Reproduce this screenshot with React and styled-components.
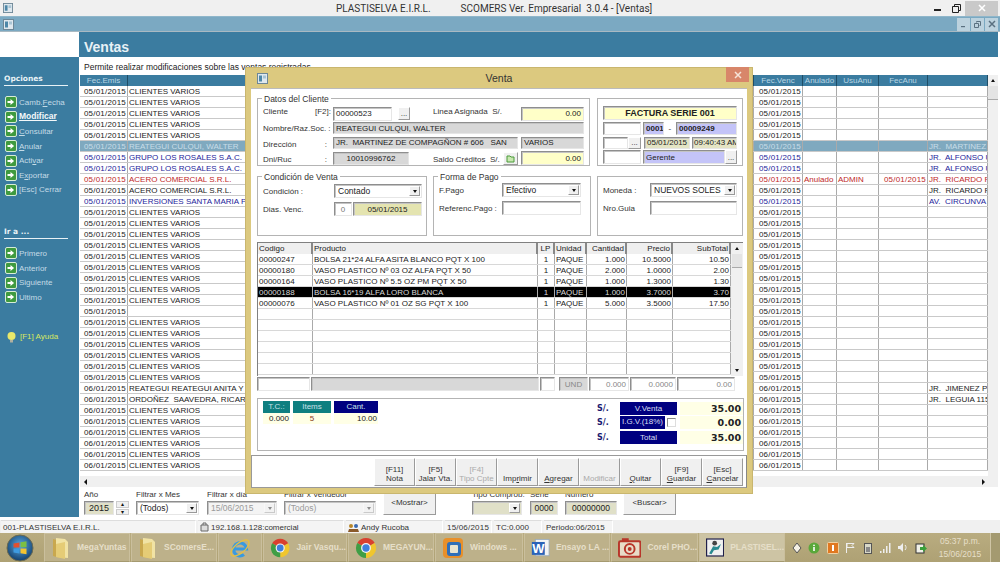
import React from 'react';
import styled, { createGlobalStyle } from 'styled-components';

const GlobalStyle = createGlobalStyle`
  html, body { margin: 0; padding: 0; background: #fff; overflow: hidden; }
  * { box-sizing: border-box; }
`;

const Screen = styled.div`
  position: relative;
  width: 1000px;
  height: 562px;
  display: flex;
  flex-direction: column;
  overflow: hidden;
  font-family: "Liberation Sans", Arial, sans-serif;
  font-size: 8px;
  line-height: 11px;
  color: #222;
  background: #f0f0f0;
`;

const TitleBar = styled.div`
  height: 16px;
  display: flex;
  align-items: center;
  padding-left: 3px;
  background: #f0f0f0;
  color: #333;
  font-family: Roboto, "Liberation Sans", sans-serif;
  font-size: 10px;
`;
const AppTitle = styled.div`
  margin-left: 323px;
  width: 591px;
  display: flex;
  gap: 30px;
  white-space: pre;
`;
const WinControls = styled.div`
  display: flex;
  align-items: center;
  height: 15px;
  margin-left: auto;
  margin-right: 2px;
`;
const WinGlyph = styled.div`
  width: ${p => p.$w}px;
  height: 15px;
  display: flex;
  align-items: center;
  justify-content: center;
  background: ${p => p.$bg || 'transparent'};
`;

const MdiBar = styled.div`
  height: 16px;
  display: flex;
  align-items: center;
  padding: 0 2px 0 3px;
  background: #7ba9c2;
  border-top: 1px solid #8fb6ca;
  border-bottom: 1px solid #a9b9c2;
`;
const MdiButtons = styled.div`
  margin-left: auto;
  display: flex;
  gap: 1px;
`;
const MdiButton = styled.div`
  width: 13px;
  height: 13px;
  display: flex;
  align-items: center;
  justify-content: center;
  background: #bcd2de;
`;

const Body = styled.div`
  height: 488px;
  display: flex;
  background: #fff;
  padding-right: 2px;
`;

const Sidebar = styled.div`
  width: 79px;
  height: 485px;
  display: flex;
  flex-direction: column;
`;
const SideBlank = styled.div`
  height: 25px;
  background: #fff;
`;
const SidePanel = styled.div`
  flex: 1;
  background: #3b7ca0;
  padding: 17px 0 0 4px;
  color: #c4dbe6;
`;
const SideTitle = styled.div`
  width: 64px;
  height: 12px;
  color: #e8f2f6;
  font-family: "DejaVu Sans", sans-serif;
  font-weight: bold;
  font-size: 7.5px;
  line-height: 10px;
  border-bottom: 1px solid #e8f2f6;
  margin-bottom: ${p => p.$mb}px;
`;
const SideItem = styled.div`
  height: 14.6px;
  display: flex;
  align-items: center;
  gap: 2px;
  padding-left: 1px;
  font-weight: ${p => (p.$active ? 'bold' : 'normal')};
  color: ${p => (p.$active ? '#f4f8fa' : '#c4dbe6')};
  font-size: ${p => (p.$active ? '8.5px' : '8px')};
`;
const SideHelp = styled.div`
  display: flex;
  align-items: center;
  gap: 3px;
  margin-top: 26px;
  padding-left: 2px;
  color: #d8e860;
`;
const SideList = styled.div`
  margin-bottom: ${p => p.$mb}px;
`;

const Content = styled.div`
  flex: 1;
  min-width: 0;
  display: flex;
  flex-direction: column;
`;
const Header = styled.div`
  height: 25px;
  padding: 5px 0 0 5px;
  display: flex;
  align-items: center;
  background: #3b7ca0;
  color: #e8f2f6;
  font-size: 14px;
  font-weight: bold;
`;
const SubText = styled.div`
  height: 18px;
  padding: 4px 0 0 5px;
  color: #222;
  font-size: 8.5px;
  line-height: 12px;
`;

const GridFrame = styled.div`
  height: 412px;
  margin-left: 1px;
  display: flex;
  flex-direction: column;
  overflow: hidden;
`;
const GridMain = styled.div`
  flex: 1;
  min-height: 0;
  display: flex;
`;
const GridTable = styled.div`
  flex: 1;
  overflow: hidden;
`;
const columns = '48px 626px 49px 34px 42px 49px 60px';
const GridHead = styled.div`
  display: grid;
  grid-template-columns: ${columns};
  height: 11px;
  background: #3b7ca0;
  color: #b9d6e4;
  text-align: center;
`;
const HeadCell = styled.div`
  border-right: 1px solid #1f4d66;
`;
const GridRow = styled.div`
  display: grid;
  grid-template-columns: ${columns};
  height: 11px;
  border-bottom: 1px solid #c9c9c9;
  background: ${p => (p.$selected ? '#7fa9bf' : '#fff')};
  color: ${p => p.$color};
`;
const Cell = styled.div`
  border-right: 1px solid #aaa;
  padding: 0 1px;
  white-space: pre;
  overflow: hidden;
  line-height: 11px;
  text-align: ${p => p.$align || 'left'};
  letter-spacing: ${p => (p.$date ? '.2px' : '0')};
`;
const VScroll = styled.div`
  width: 10px;
  background: #f0f0f0;
  display: flex;
  flex-direction: column;
  align-items: center;
`;
const ScrollThumb = styled.div`
  width: 10px;
  height: 14px;
  background: #e4e4e4;
  border-bottom: 1px solid #aaa;
`;
const ScrollArrow = styled.div`
  height: 11px;
  width: 10px;
  display: flex;
  align-items: center;
  justify-content: center;
  margin-top: ${p => (p.$end ? 'auto' : '0')};
`;
const Tri = styled.div`
  width: 0;
  height: 0;
  border-left: 2.5px solid transparent;
  border-right: 2.5px solid transparent;
  border-${p => (p.$up ? 'bottom' : 'top')}: 3px solid #111;
`;
const TriSide = styled.div`
  width: 0;
  height: 0;
  border-top: 3px solid transparent;
  border-bottom: 3px solid transparent;
  border-${p => (p.$left ? 'right' : 'left')}: 3px solid #111;
`;
const HScroll = styled.div`
  height: 11px;
  display: flex;
  align-items: center;
  justify-content: space-between;
  background: #f0f0f0;
  padding: 0 13px 0 4px;
`;

const FilterBar = styled.div`
  height: 30px;
  padding: 3px 0 0 5px;
  display: flex;
  align-items: flex-start;
  background: #fff;
`;
const FilterGroup = styled.div`
  width: ${p => p.$w}px;
  display: flex;
  flex-direction: column;
  color: #333;
  font-size: 8px;
  line-height: 10px;
`;
const FilterControl = styled.div`
  display: flex;
  gap: 2px;
  margin-top: 1px;
`;
const Spinner = styled.div`
  width: 13px;
  height: 14px;
  display: flex;
  flex-direction: column;
  gap: 1px;
`;
const SpinPart = styled.div`
  flex: 1;
  background: #f0f0f0;
  border: 1px solid #ccc;
  color: #111;
  font-size: 6px;
  line-height: 4px;
  text-align: center;
`;

const Field = styled.div`
  width: ${p => p.$w}px;
  height: ${p => p.$h || 14}px;
  flex: none;
  padding: ${p => (p.$pad === undefined ? '0 2px' : p.$pad)};
  display: flex;
  align-items: center;
  justify-content: ${p => p.$justify || 'flex-start'};
  white-space: pre;
  overflow: hidden;
  background: ${p => p.$bg || '#fff'};
  color: ${p => p.$color || '#222'};
  font-weight: ${p => (p.$bold ? 'bold' : 'normal')};
  font-size: ${p => p.$size || 8}px;
  border: 1px solid;
  border-color: #8e8e8e #e6e6e6 #e6e6e6 #8e8e8e;
  box-shadow: inset 1px 1px 0 #c4c4c4;
`;
const SelectBox = styled.div`
  width: ${p => p.$w}px;
  height: 14px;
  flex: none;
  display: flex;
  align-items: center;
  justify-content: space-between;
  padding: 0 1px 0 3px;
  background: ${p => p.$bg || '#fff'};
  color: ${p => (p.$disabled ? '#9a9a9a' : '#222')};
  font-size: 8.5px;
  border: 1px solid;
  border-color: #8e8e8e #e6e6e6 #e6e6e6 #8e8e8e;
  box-shadow: inset 1px 1px 0 #c4c4c4;
`;
const SelectArrow = styled.div`
  width: 11px;
  height: 10px;
  margin-left: auto;
  display: flex;
  align-items: center;
  justify-content: center;
  background: #f0f0f0;
  border: 1px solid;
  border-color: #fff #999 #999 #fff;
  opacity: ${p => (p.$disabled ? 0.45 : 1)};
`;
const PushButton = styled.div`
  width: ${p => p.$w}px;
  height: ${p => p.$h}px;
  flex: none;
  display: flex;
  align-items: center;
  justify-content: center;
  background: #f0f0f0;
  color: #333;
  font-size: 8px;
  border: 1px solid;
  border-color: #fff #9a9a9a #9a9a9a #fff;
`;

const Dialog = styled.div`
  position: absolute;
  left: 245px;
  top: 67px;
  width: 508px;
  height: 427px;
  display: flex;
  flex-direction: column;
  padding: 0 5px 5px;
  background: #dcc97f;
  border: 1px solid #c9b66e;
`;
const DialogTitle = styled.div`
  position: relative;
  height: 20px;
  flex: none;
  display: flex;
  align-items: center;
  justify-content: center;
  color: #333;
  font-size: 10.5px;
`;
const DialogIcon = styled.div`
  position: absolute;
  left: 6px;
  top: 5px;
`;
const DialogClose = styled.div`
  position: absolute;
  right: -2px;
  top: -1px;
  width: 23px;
  height: 15px;
  display: flex;
  align-items: center;
  justify-content: center;
  background: #d8866a;
`;
const DialogClient = styled.div`
  flex: 1;
  display: flex;
  flex-direction: column;
  background: #fff;
  padding: 9px 4px 0 6px;
  border-top: 1px solid #bbb;
`;
const GroupRow = styled.div`
  display: flex;
  gap: ${p => p.$gap}px;
  margin-bottom: ${p => p.$mb}px;
`;
const Group = styled.div`
  position: relative;
  width: ${p => p.$w}px;
  height: ${p => p.$h}px;
  padding: ${p => p.$pad};
  border: 1px solid #b4b4b4;
  display: flex;
  flex-direction: column;
  gap: ${p => p.$gap || 2}px;
`;
const Legend = styled.div`
  position: absolute;
  left: 4px;
  top: -5px;
  padding: 0 2px;
  background: #fff;
  color: #333;
  font-size: 8.5px;
  line-height: 10px;
`;
const FormRow = styled.div`
  display: flex;
  align-items: center;
  min-height: ${p => p.$h || 12}px;
`;
const Label = styled.div`
  width: ${p => p.$w}px;
  flex: none;
  display: flex;
  justify-content: space-between;
  color: #333;
  font-size: 8px;
  white-space: pre;
  padding-right: ${p => p.$pr || 0}px;
  margin-bottom: ${p => p.$lift || 0}px;
  margin-top: ${p => p.$drop || 0}px;
`;
const Spacer = styled.div`
  width: ${p => p.$w}px;
  flex: none;
`;

const ItemsTable = styled.div`
  width: 486px;
  height: 134px;
  flex: none;
  display: flex;
  border-top: 1px solid #808080;
  border-left: 1px solid #808080;
`;
const ItemsBody = styled.div`
  flex: 1;
`;
const itemColumns = '55px 225px 17px 32px 40px 46px 58px';
const ItemsHead = styled.div`
  display: grid;
  grid-template-columns: ${itemColumns};
  height: 11px;
  background: #efefef;
  color: #222;
`;
const ItemHeadCell = styled.div`
  padding: 0 1px;
  border-right: 2px solid #888;
  line-height: 11px;
  text-align: ${p => p.$align || 'left'};
`;
const ItemRow = styled.div`
  display: grid;
  grid-template-columns: ${itemColumns};
  height: 11px;
  border-bottom: 1px solid #d8d8d8;
  background: ${p => (p.$selected ? '#000' : '#fff')};
  color: ${p => (p.$selected ? '#d8d8d8' : '#222')};
`;
const ItemCell = styled.div`
  padding: 0 1px;
  border-right: 1px solid #aaa;
  line-height: 11px;
  white-space: nowrap;
  overflow: hidden;
  text-align: ${p => p.$align || 'left'};
`;
const ItemsScroll = styled(VScroll)`
  width: 12px;
`;
const TotalsRow = styled.div`
  display: flex;
  gap: 1px;
  margin: 1px 0 7px;
`;
const SummaryPanel = styled.div`
  width: 487px;
  height: 53px;
  flex: none;
  display: flex;
  justify-content: space-between;
  padding: 2px 0 0 5px;
  border: 1px solid #b4b4b4;
`;
const MiniTable = styled.div`
  display: grid;
  grid-template-columns: 27px 38px 44px;
  column-gap: 3px;
  align-self: flex-start;
`;
const MiniHead = styled.div`
  height: 12px;
  text-align: center;
  background: ${p => p.$bg};
  color: #c8e0e8;
`;
const MiniValue = styled.div`
  height: 11px;
  background: #ffffe6;
  text-align: ${p => p.$align};
  color: ${p => p.$color || '#222'};
  padding: 0 1px;
`;
const Amounts = styled.div`
  display: grid;
  grid-template-columns: 23px 57px 66px;
  grid-auto-rows: 14.5px;
  align-items: center;
`;
const Currency = styled.div`
  color: #1a1a70;
  font-weight: bold;
  font-family: "DejaVu Sans", sans-serif;
  font-size: 8px;
`;
const AmountLabel = styled.div`
  height: 13px;
  display: flex;
  align-items: center;
  justify-content: ${p => (p.$tight ? 'flex-start' : 'center')};
  gap: 2px;
  background: ${p => (p.$tight ? 'transparent' : '#000080')};
  color: #d8def0;
`;
const AmountTag = styled.div`
  height: 13px;
  width: 45px;
  background: #000080;
  text-align: center;
`;
const CheckMark = styled.div`
  width: 9px;
  height: 9px;
  background: #fff;
  border: 1px solid;
  border-color: #888 #ddd #ddd #888;
`;
const AmountValue = styled.div`
  height: 13px;
  margin-left: 3px;
  background: #ffffe6;
  text-align: right;
  padding-right: 2px;
  color: #222;
  font-family: "DejaVu Sans", sans-serif;
  font-size: 9.5px;
  font-weight: bold;
  line-height: 13px;
`;
const ActionBar = styled.div`
  margin: 4px -4px 0 -6px;
  height: 33px;
  flex: none;
  display: flex;
  justify-content: flex-end;
  align-items: center;
  padding-right: 3px;
  border: 1px solid #999;
  border-right-color: #888;
`;
const ActionButton = styled.div`
  width: 41px;
  height: 28px;
  padding-bottom: 2px;
  display: flex;
  flex-direction: column;
  align-items: center;
  justify-content: flex-end;
  background: #f0f0f0;
  color: ${p => (p.$off ? '#aaa' : '#333')};
  font-size: 8px;
  line-height: 9px;
  border: 1px solid;
  border-color: #fff #9a9a9a #9a9a9a #fff;
`;

const StatusBar = styled.div`
  height: 13px;
  display: flex;
  gap: 2px;
  padding-left: 1px;
  background: #f0f0f0;
  font-size: 8px;
`;
const StatusCell = styled.div`
  width: ${p => p.$w}px;
  height: 13px;
  display: flex;
  align-items: center;
  gap: 2px;
  padding-left: 2px;
  color: #333;
  white-space: nowrap;
  letter-spacing: ${p => (p.$date ? '.2px' : '0')};
  border-top: 1px solid #ddd;
  border-right: 1px solid #fff;
  background: #f4f4f4;
`;

const Taskbar = styled.div`
  height: 29px;
  display: flex;
  align-items: stretch;
  background: linear-gradient(#b9ac80, #aea174);
`;
const StartButton = styled.div`
  width: 44px;
  padding-right: 4px;
  display: flex;
  align-items: center;
  justify-content: center;
`;
const TaskItem = styled.div`
  width: ${p => p.$w}px;
  margin-right: 1px;
  display: flex;
  align-items: center;
  justify-content: ${p => (p.$solo ? 'center' : 'flex-start')};
  gap: 6px;
  padding-left: ${p => (p.$solo ? 0 : 6)}px;
  color: #e6dfc9;
  font-size: 8.5px;
  font-weight: bold;
  white-space: nowrap;
  background: ${p => (p.$active ? '#cdc4a4' : '#bdb18a')};
  border: 1px solid #cabf9d;
  border-bottom-color: #a59a70;
`;
const Tray = styled.div`
  width: 142px;
  margin-left: 3px;
  display: flex;
  align-items: center;
`;
const TraySlot = styled.div`
  width: ${p => p.$w}px;
  display: flex;
  justify-content: center;
`;
const Clock = styled.div`
  width: 48px;
  margin-left: 5px;
  text-align: center;
  color: #e6dfc9;
  font-size: 8.5px;
  line-height: 13px;
  padding-top: 2px;
`;
const ShowDesktop = styled.div`
  width: 10px;
  margin-left: auto;
  background: #a49a70;
  border-left: 1px solid #cfc5a5;
`;

const Bolt = () => (
  <svg width="12" height="12" viewBox="0 0 12 12">
    <rect x=".5" y=".5" width="11" height="11" rx="1.5" fill="#3f9a3f" stroke="#d8ecd8" />
    <path d="M2.5 5h3V3l3.6 3-3.6 3V7h-3z" fill="#fff" />
  </svg>
);

const Bulb = () => (
  <svg width="11" height="12" viewBox="0 0 11 12">
    <circle cx="5.5" cy="5" r="4" fill="#e8e86a" />
    <rect x="4" y="9" width="3" height="2.5" fill="#b0b0a0" />
  </svg>
);

const SmallWindow = ({ size = 11 }) => (
  <svg width={size} height={size} viewBox="0 0 11 11">
    <rect x=".5" y=".5" width="10" height="10" fill="#dfe8ee" stroke="#6d8797" />
    <rect x="2" y="2.5" width="3" height="6" fill="#4d87a8" />
    <rect x="6" y="2.5" width="3" height="3" fill="#a8c4d4" />
  </svg>
);

const CloseGlyph = ({ color }) => (
  <svg width="8" height="8" viewBox="0 0 8 8">
    <path d="M1 1l6 6M7 1l-6 6" stroke={color} strokeWidth="1.5" />
  </svg>
);

const FolderIcon = () => (
  <svg width="20" height="24" viewBox="0 0 20 24">
    <path d="M2 3l7 2v17l-7-2z" fill="#c9a84e" />
    <path d="M5 2l9 1 3 3v16l-12-1z" fill="#f1e3a4" />
    <path d="M5 8l9-2v17l-9-2z" fill="#e5cc76" />
  </svg>
);

const IeIcon = () => (
  <svg width="24" height="24" viewBox="0 0 24 24">
    <path d="M6 13h12.5A6.5 6.5 0 1 0 16 18.5" fill="none" stroke="#3a9ae0" strokeWidth="3.2" />
    <ellipse cx="12" cy="12" rx="11" ry="5" transform="rotate(-40 12 12)" fill="none" stroke="#e8c040" strokeWidth="1.3" />
  </svg>
);

const ChromeIcon = () => (
  <svg width="22" height="22" viewBox="0 0 24 24">
    <path d="M12 12L2.5 6.5A11 11 0 0 1 21.5 6.5Z" fill="#d9402f" />
    <path d="M12 12L21.5 6.5A11 11 0 0 1 12 23Z" fill="#f0c62e" />
    <path d="M12 12L12 23A11 11 0 0 1 2.5 6.5Z" fill="#3f9e45" />
    <circle cx="12" cy="12" r="5.4" fill="#f4f4f4" />
    <circle cx="12" cy="12" r="4" fill="#3f7fdc" />
  </svg>
);

const VmIcon = () => (
  <svg width="22" height="22" viewBox="0 0 22 22">
    <rect x="1" y="1" width="20" height="20" rx="4" fill="#e8902a" />
    <rect x="5" y="5" width="14" height="14" rx="3" fill="#2f6fb8" />
    <rect x="8" y="8" width="8" height="8" rx="1" fill="#e8e4d0" />
  </svg>
);

const WordIcon = () => (
  <svg width="22" height="22" viewBox="0 0 22 22">
    <rect x="5" y="1" width="16" height="19" fill="#f4f4f4" stroke="#9ab" />
    <rect x="1" y="4" width="15" height="15" fill="#2a62b8" />
    <text x="8.5" y="16.5" textAnchor="middle" fontSize="15" fontWeight="bold" fontFamily="Liberation Sans" fill="#fff">W</text>
  </svg>
);

const CorelIcon = () => (
  <svg width="24" height="22" viewBox="0 0 24 22">
    <rect x="1" y="4" width="22" height="16" rx="1.5" fill="#e8dcc8" stroke="#b8362a" strokeWidth="2" />
    <circle cx="12" cy="12" r="5" fill="none" stroke="#b8362a" strokeWidth="2" />
    <circle cx="12" cy="12" r="2" fill="#b8362a" />
    <rect x="4" y="1" width="7" height="3" fill="#b8362a" />
  </svg>
);

const PlastiIcon = () => (
  <svg width="23" height="23" viewBox="0 0 23 23">
    <rect x=".75" y=".75" width="21.5" height="21.5" fill="#f0f0f0" stroke="#20204a" strokeWidth="1.5" />
    <circle cx="11" cy="6" r="3" fill="#444" />
    <path d="M4 19l5-9 5 1 5-4-3 7-6 1-3 5z" fill="#2a8a90" />
  </svg>
);

const StartOrb = () => (
  <svg width="28" height="28" viewBox="0 0 28 28">
    <defs>
      <radialGradient id="orb" cx="50%" cy="40%" r="60%">
        <stop offset="0" stopColor="#5aa8e0" />
        <stop offset="1" stopColor="#12406e" />
      </radialGradient>
    </defs>
    <circle cx="14" cy="14" r="13" fill="url(#orb)" stroke="#6a6a50" />
    <path d="M7.5 9.5l6-1v5h-6z" fill="#e2502f" />
    <path d="M14.5 8.3l6-1v6h-6z" fill="#7cc042" />
    <path d="M7.5 14.5h6v5l-6-1z" fill="#3e9be0" />
    <path d="M14.5 14.5h6v5.7l-6-1z" fill="#f4c430" />
  </svg>
);

const TrayIcons = () => (
  <Tray>
    <TraySlot $w={16}>
      <svg width="10" height="12" viewBox="0 0 10 12">
        <path d="M5 1l4 5-4 5-4-5z" fill="#f4f0e4" stroke="#555" />
      </svg>
    </TraySlot>
    <TraySlot $w={18.5}>
      <svg width="12" height="12" viewBox="0 0 12 12">
        <circle cx="6" cy="6" r="5.5" fill="#5aa83a" />
        <rect x="5.2" y="5" width="1.6" height="4" fill="#fff" />
        <rect x="5.2" y="2.7" width="1.6" height="1.4" fill="#fff" />
      </svg>
    </TraySlot>
    <TraySlot $w={18}>
      <svg width="12" height="12" viewBox="0 0 12 12">
        <rect x=".5" y=".5" width="11" height="11" rx="1" fill="#e07820" stroke="#f0d0a0" />
        <rect x="5" y="3" width="2" height="6" fill="#fff" />
      </svg>
    </TraySlot>
    <TraySlot $w={17.5}>
      <svg width="10" height="12" viewBox="0 0 10 12">
        <path d="M1.5 1v10" stroke="#eee" />
        <path d="M2 1.5h7l-2 2 2 2H2z" fill="none" stroke="#eee" />
      </svg>
    </TraySlot>
    <TraySlot $w={18}>
      <svg width="8" height="12" viewBox="0 0 8 12">
        <rect x=".5" y="1.5" width="7" height="10" fill="#d8d8c8" stroke="#555" />
        <rect x="2" y="5" width="4" height="5" fill="#888" />
      </svg>
    </TraySlot>
    <TraySlot $w={16}>
      <svg width="12" height="11" viewBox="0 0 12 11">
        <path d="M1 9h1.5v2H1zM4 7h1.5v4H4zM7 4h1.5v7H7zM10 1h1.5v10H10z" fill="#eee" />
      </svg>
    </TraySlot>
    <TraySlot $w={18}>
      <svg width="11" height="11" viewBox="0 0 11 11">
        <path d="M1 4h2l3-3v9L3 7H1z" fill="#eee" />
        <path d="M8 3c1.4 1.4 1.4 3.6 0 5" fill="none" stroke="#eee" />
      </svg>
    </TraySlot>
    <TraySlot $w={20}>
      <svg width="12" height="12" viewBox="0 0 12 12">
        <rect x="1" y="2" width="8" height="9" fill="#f0f0e8" stroke="#333" />
        <path d="M5 5h3V3l4 3.5L8 10V8H5z" fill="#3aa03a" />
      </svg>
    </TraySlot>
  </Tray>
);

const clientes = 'CLIENTES VARIOS';
const NAVY = '#24249a';
const RED = '#c02828';
const BLACK = '#222';
const d1 = '05/01/2015';
const d2 = '06/01/2015';

const specialRows = [
  { name: 'REATEGUI CULQUI, WALTER', selected: true, color: '#c8dde8', dir: 'JR.  MARTINEZ' },
  { name: 'GRUPO LOS ROSALES S.A.C.', color: NAVY, dir: 'JR.  ALFONSO U' },
  { name: 'GRUPO LOS ROSALES S.A.C.', color: NAVY, dir: 'JR.  ALFONSO U' },
  { name: 'ACERO COMERCIAL S.R.L.', color: RED, dir: 'JR.  RICARDO P', anulado: 'Anulado', usu: 'ADMIN', fec: d1 },
  { name: 'ACERO COMERCIAL S.R.L.', color: BLACK, dir: 'JR.  RICARDO P' },
  { name: 'INVERSIONES SANTA MARIA P', color: NAVY, dir: 'AV.  CIRCUNVA' },
];

const rows = [
  ...Array(5).fill({ name: clientes }),
  ...specialRows,
  ...Array(9).fill({ name: clientes }),
  { name: '' },
  ...Array(6).fill({ name: clientes }),
  { name: 'REATEGUI REATEGUI ANITA Y', date: d2, dir: 'JR.  JIMENEZ P' },
  { name: 'ORDOÑEZ  SAAVEDRA, RICAR', date: d2, dir: 'JR.  LEGUIA 115' },
  ...Array(6).fill({ name: clientes, date: d2 }),
];

const items = [
  ['00000247', 'BOLSA 21*24 ALFA ASITA BLANCO PQT X 100', '1', 'PAQUE', '1.000', '10.5000', '10.50'],
  ['00000180', 'VASO PLASTICO Nº 03 OZ ALFA PQT X 50', '1', 'PAQUE', '2.000', '1.0000', '2.00'],
  ['00000164', 'VASO PLASTICO Nº 5.5 OZ PM PQT X 50', '1', 'PAQUE', '1.000', '1.3000', '1.30'],
  ['00000188', 'BOLSA 16*19 ALFA LORO BLANCA', '1', 'PAQUE', '1.000', '3.7000', '3.70'],
  ['00000076', 'VASO PLASTICO Nº 01 OZ SG PQT X 100', '1', 'PAQUE', '5.000', '3.5000', '17.50'],
  ...Array(6).fill(['', '', '', '', '', '', '']),
];
const itemAlign = ['left', 'left', 'center', 'left', 'right', 'right', 'right'];

const actions = [
  { top: '[F11]', label: 'Nota' },
  { top: '[F5]', label: 'Jalar Vta.' },
  { top: '[F4]', label: 'Tipo Cpte', off: true },
  { label: <>Imp<u>r</u>imir</> },
  { label: <><u>A</u>gregar</> },
  { label: 'Modificar', off: true },
  { label: <><u>Q</u>uitar</> },
  { top: '[F9]', label: <><u>G</u>uardar</> },
  { top: '[Esc]', label: <><u>C</u>ancelar</> },
];

const sideOptions = [
  { label: <>Camb.<u>F</u>echa</> },
  { label: <u>Modificar</u>, active: true },
  { label: <><u>C</u>onsultar</> },
  { label: <><u>A</u>nular</> },
  { label: <>Acti<u>v</u>ar</> },
  { label: <>E<u>x</u>portar</> },
  { label: '[Esc] Cerrar' },
];

function Select({ w, value, disabled, bg }) {
  return (
    <SelectBox $w={w} $disabled={disabled} $bg={bg}>
      {value}
      <SelectArrow $disabled={disabled}><Tri /></SelectArrow>
    </SelectBox>
  );
}

function VentaDialog() {
  return (
    <Dialog>
      <DialogTitle>
        <DialogIcon><SmallWindow /></DialogIcon>
        Venta
        <DialogClose><CloseGlyph color="#f6e3d8" /></DialogClose>
      </DialogTitle>
      <DialogClient>
        <GroupRow $gap={7} $mb={10}>
          <Group $w={333} $h={68} $pad="7px 0 0 5px" $gap={1}>
            <Legend>Datos del Cliente</Legend>
            <FormRow $h={15}>
              <Label $w={70} $pr={2} $lift={4}><span>Cliente</span><span>[F2]:</span></Label>
              <Field $w={59}>00000523</Field>
              <Spacer $w={6} />
              <PushButton $w={12} $h={13}>...</PushButton>
              <Spacer $w={23} />
              <Label $w={88} $lift={4}>Linea Asignada  S/.</Label>
              <Field $w={63} $bg="#ffffc8" $justify="flex-end">0.00</Field>
            </FormRow>
            <FormRow>
              <Label $w={70}>Nombre/Raz.Soc. :</Label>
              <Field $w={251} $h={12} $bg="#d8d8d8">REATEGUI CULQUI, WALTER</Field>
            </FormRow>
            <FormRow>
              <Label $w={70} $pr={6} $drop={4}><span>Dirección</span><span>:</span></Label>
              <Field $w={185} $h={12} $bg="#d8d8d8">JR.  MARTINEZ DE COMPAGÑON # 606   SAN</Field>
              <Spacer $w={3} />
              <Field $w={63} $h={12} $bg="#d8d8d8">VARIOS</Field>
            </FormRow>
            <FormRow>
              <Label $w={70} $pr={6} $drop={2}><span>Dni/Ruc</span><span>:</span></Label>
              <Field $w={76} $h={13} $bg="#d8d8d8" $justify="center">10010996762</Field>
              <Spacer $w={24} />
              <Label $w={70} $drop={2}>Saldo Créditos  S/.</Label>
              <PushButton $w={15} $h={13}>
                <svg width="9" height="9" viewBox="0 0 9 9">
                  <path d="M1 2h3l1 1h3v5H1z" fill="#c8e8b0" stroke="#4a9a3a" />
                </svg>
              </PushButton>
              <Spacer $w={3} />
              <Field $w={63} $bg="#ffffc8" $justify="flex-end">0.00</Field>
            </FormRow>
          </Group>
          <Group $w={146} $h={68} $pad="7px 0 0 5px" $gap={1}>
            <FormRow $h={14}>
              <Field $w={134} $bg="#ffffc8" $bold $justify="center" $size={9}>FACTURA SERIE 001</Field>
            </FormRow>
            <FormRow $h={14}>
              <Field $w={38} $h={13} />
              <Spacer $w={2} />
              <Field $w={21} $h={13} $bg="#c4c4f8" $bold>0001</Field>
              <Label $w={12}>  -</Label>
              <Field $w={61} $h={13} $bg="#c4c4f8" $bold>00009249</Field>
            </FormRow>
            <FormRow $h={13}>
              <Field $w={25} $h={12} />
              <PushButton $w={13} $h={12}>...</PushButton>
              <Spacer $w={3} />
              <Field $w={46} $h={12} $bg="#e4e4c4">05/01/2015</Field>
              <Spacer $w={2} />
              <Field $w={45} $h={12} $bg="#e4e4c4" $pad="0 1px">09:40:43 AM</Field>
            </FormRow>
            <FormRow $h={14}>
              <Field $w={38} />
              <Spacer $w={2} />
              <Field $w={82} $bg="#c4c4f8">Gerente</Field>
              <PushButton $w={12} $h={14}>...</PushButton>
            </FormRow>
          </Group>
        </GroupRow>
        <GroupRow $gap={6} $mb={6}>
          <Group $w={170} $h={60} $pad="7px 0 0 5px" $gap={4}>
            <Legend>Condición de Venta</Legend>
            <FormRow $h={14}>
              <Label $w={71}>Condición :</Label>
              <Select w={88} value="Contado" />
            </FormRow>
            <FormRow $h={14}>
              <Label $w={71}>Dias. Venc.</Label>
              <Field $w={18} $justify="center" $color="#777">0</Field>
              <Spacer $w={1} />
              <Field $w={69} $bg="#e4e4b0" $justify="center">05/01/2015</Field>
            </FormRow>
          </Group>
          <Group $w={158} $h={60} $pad="6px 0 0 5px" $gap={4}>
            <Legend>Forma de Pago</Legend>
            <FormRow $h={14}>
              <Label $w={63}>F.Pago</Label>
              <Select w={79} value="Efectivo" />
            </FormRow>
            <FormRow $h={14}>
              <Label $w={63}>Referenc.Pago :</Label>
              <Field $w={79} />
            </FormRow>
          </Group>
          <Group $w={146} $h={60} $pad="6px 0 0 5px" $gap={4}>
            <FormRow $h={14}>
              <Label $w={47}>Moneda :</Label>
              <Select w={87} value="NUEVOS SOLES" />
            </FormRow>
            <FormRow $h={14}>
              <Label $w={47}>Nro.Guia</Label>
              <Field $w={87} />
            </FormRow>
          </Group>
        </GroupRow>
        <ItemsTable>
          <ItemsBody>
            <ItemsHead>
              <ItemHeadCell>Codigo</ItemHeadCell>
              <ItemHeadCell>Producto</ItemHeadCell>
              <ItemHeadCell $align="center">LP</ItemHeadCell>
              <ItemHeadCell>Unidad</ItemHeadCell>
              <ItemHeadCell $align="right">Cantidad</ItemHeadCell>
              <ItemHeadCell $align="right">Precio</ItemHeadCell>
              <ItemHeadCell $align="right">SubTotal</ItemHeadCell>
            </ItemsHead>
            {items.map((row, i) => (
              <ItemRow key={i} $selected={row[0] === '00000188'}>
                {row.map((value, j) => (
                  <ItemCell key={j} $align={itemAlign[j]}>{value}</ItemCell>
                ))}
              </ItemRow>
            ))}
          </ItemsBody>
          <ItemsScroll>
            <ScrollArrow><Tri $up /></ScrollArrow>
            <ScrollThumb />
            <ScrollArrow $end><Tri /></ScrollArrow>
          </ItemsScroll>
        </ItemsTable>
        <TotalsRow>
          <Field $w={53} />
          <Field $w={228} $bg="#d8d8d8" />
          <Field $w={15} />
          <Spacer $w={2} />
          <Field $w={29} $bg="#d8d8d8" $color="#888" $justify="center">UND</Field>
          <Field $w={40} $color="#888" $justify="flex-end">0.000</Field>
          <Field $w={46} $color="#888" $justify="flex-end">0.0000</Field>
          <Field $w={58} $color="#888" $justify="flex-end">0.00</Field>
        </TotalsRow>
        <SummaryPanel>
          <MiniTable>
            <MiniHead $bg="#0f7f80">T.C.:</MiniHead>
            <MiniHead $bg="#0f7f80">Items</MiniHead>
            <MiniHead $bg="#000080">Cant.</MiniHead>
            <MiniValue $align="right">0.000</MiniValue>
            <MiniValue $align="center" $color="#8a3a1a">5</MiniValue>
            <MiniValue $align="right">10.00</MiniValue>
          </MiniTable>
          <Amounts>
            <Currency>S/.</Currency>
            <AmountLabel>V.Venta</AmountLabel>
            <AmountValue>35.00</AmountValue>
            <Currency>S/.</Currency>
            <AmountLabel $tight>
              <AmountTag>I.G.V.(18%)</AmountTag>
              <CheckMark />
            </AmountLabel>
            <AmountValue>0.00</AmountValue>
            <Currency>S/.</Currency>
            <AmountLabel>Total</AmountLabel>
            <AmountValue>35.00</AmountValue>
          </Amounts>
        </SummaryPanel>
        <ActionBar>
          {actions.map((a, i) => (
            <ActionButton key={i} $off={a.off}>
              {a.top && <span>{a.top}</span>}
              <span>{a.label}</span>
            </ActionButton>
          ))}
        </ActionBar>
      </DialogClient>
    </Dialog>
  );
}

export default function App() {
  return (
    <Screen>
      <GlobalStyle />
      <TitleBar>
        <SmallWindow size={10} />
        <AppTitle>
          <span>PLASTISELVA E.I.R.L.</span>
          <span>SCOMERS Ver. Empresarial  3.0.4 - [Ventas]</span>
        </AppTitle>
        <WinControls>
          <WinGlyph $w={18}>
            <svg width="8" height="8" viewBox="0 0 8 8"><rect x="0" y="5" width="7" height="2" fill="#222" /></svg>
          </WinGlyph>
          <WinGlyph $w={18}>
            <svg width="9" height="9" viewBox="0 0 9 9">
              <path d="M2.5 2V.5h6v6H7M.5 2.5h6v6h-6z" fill="none" stroke="#222" />
            </svg>
          </WinGlyph>
          <WinGlyph $w={33} $bg="#c9c9c9"><CloseGlyph color="#fff" /></WinGlyph>
        </WinControls>
      </TitleBar>
      <MdiBar>
        <SmallWindow />
        <MdiButtons>
          <MdiButton>
            <svg width="7" height="7" viewBox="0 0 7 7"><rect x="1" y="5" width="4" height="1.2" fill="#5a7080" /></svg>
          </MdiButton>
          <MdiButton>
            <svg width="7" height="7" viewBox="0 0 7 7"><path d="M2.5 1.5V.5h4v4h-1M.5 2.5h4v4h-4z" fill="none" stroke="#5a7080" /></svg>
          </MdiButton>
          <MdiButton><CloseGlyph color="#5a7080" /></MdiButton>
        </MdiButtons>
      </MdiBar>
      <Body>
        <Sidebar>
          <SideBlank />
          <SidePanel>
            <SideTitle $mb={9}>Opciones</SideTitle>
            <SideList $mb={30}>
              {sideOptions.map((o, i) => (
                <SideItem key={i} $active={o.active}><Bolt /><span>{o.label}</span></SideItem>
              ))}
            </SideList>
            <SideTitle $mb={7}>Ir a ...</SideTitle>
            <SideList $mb={0}>
              {['Primero', 'Anterior', 'Siguiente', 'Ultimo'].map(label => (
                <SideItem key={label}><Bolt /><span>{label}</span></SideItem>
              ))}
            </SideList>
            <SideHelp><Bulb />[F1] Ayuda</SideHelp>
          </SidePanel>
        </Sidebar>
        <Content>
          <Header>Ventas</Header>
          <SubText>Permite realizar modificaciones sobre las ventas registradas</SubText>
          <GridFrame>
            <GridMain>
              <GridTable>
                <GridHead>
                  {['Fec.Emis', 'Cliente', 'Fec.Venc', 'Anulado', 'UsuAnu', 'FecAnu', ''].map((h, i) => (
                    <HeadCell key={i}>{h}</HeadCell>
                  ))}
                </GridHead>
                {rows.map((r, i) => (
                  <GridRow key={i} $selected={r.selected} $color={r.color || BLACK}>
                    <Cell $align="right" $date>{r.date || d1}</Cell>
                    <Cell>{r.name}</Cell>
                    <Cell $align="right" $date>{r.date || d1}</Cell>
                    <Cell>{r.anulado}</Cell>
                    <Cell>{r.usu}</Cell>
                    <Cell $align="right" $date>{r.fec}</Cell>
                    <Cell>{r.dir}</Cell>
                  </GridRow>
                ))}
              </GridTable>
              <VScroll>
                <ScrollArrow><Tri $up /></ScrollArrow>
                <ScrollThumb />
              </VScroll>
            </GridMain>
            <HScroll>
              <TriSide $left />
              <TriSide />
            </HScroll>
          </GridFrame>
          <FilterBar>
            <FilterGroup $w={52}>
              Año
              <FilterControl>
                <Field $w={30} $bg="#e0e0c8" $justify="center" $size={9}>2015</Field>
                <Spinner>
                  <SpinPart>▴</SpinPart>
                  <SpinPart>▾</SpinPart>
                </Spinner>
              </FilterControl>
            </FilterGroup>
            <FilterGroup $w={71}>
              Filtrar x Mes
              <FilterControl><Select w={63} value="(Todos)" /></FilterControl>
            </FilterGroup>
            <FilterGroup $w={77}>
              Filtrar x día
              <FilterControl><Select w={70} value="15/06/2015" disabled bg="#f4f4f4" /></FilterControl>
            </FilterGroup>
            <FilterGroup $w={99}>
              Filtrar x Vendedor
              <FilterControl><Select w={92} value="(Todos)" disabled bg="#f4f4f4" /></FilterControl>
            </FilterGroup>
            <FilterGroup $w={89}>
              <PushButton $w={53} $h={25}>&lt;Mostrar&gt;</PushButton>
            </FilterGroup>
            <FilterGroup $w={58}>
              Tipo Comprob:
              <FilterControl><Select w={50} value="" bg="#e0e0c8" /></FilterControl>
            </FilterGroup>
            <FilterGroup $w={35}>
              Serie
              <FilterControl><Field $w={28} $bg="#e0e0c8" $justify="center" $size={8.5}>0000</Field></FilterControl>
            </FilterGroup>
            <FilterGroup $w={58}>
              Numero
              <FilterControl><Field $w={52} $bg="#e0e0c8" $justify="center" $size={8.5}>00000000</Field></FilterControl>
            </FilterGroup>
            <FilterGroup $w={54}>
              <PushButton $w={53} $h={25}>&lt;Buscar&gt;</PushButton>
            </FilterGroup>
          </FilterBar>
        </Content>
      </Body>
      <StatusBar>
        <StatusCell $w={195}>001-PLASTISELVA E.I.R.L.</StatusCell>
        <StatusCell $w={146}>
          <svg width="9" height="10" viewBox="0 0 9 10"><path d="M1 3h7v6H1z" fill="#ddd" stroke="#666" /><path d="M3 3V1h3v2" fill="none" stroke="#666" /></svg>
          192.168.1.128:comercial
        </StatusCell>
        <StatusCell $w={97}>
          <svg width="11" height="9" viewBox="0 0 11 9"><circle cx="3" cy="3" r="2" fill="#b8862a" /><circle cx="8" cy="3" r="2" fill="#3a6ab0" /><path d="M0 9l1-3h9l1 3z" fill="#8a5a2a" /></svg>
          Andy Rucoba
        </StatusCell>
        <StatusCell $w={47} $date>15/06/2015</StatusCell>
        <StatusCell $w={48}>TC:0.000</StatusCell>
        <StatusCell $w={69}>Periodo:06/2015</StatusCell>
      </StatusBar>
      <Taskbar>
        <StartButton><StartOrb /></StartButton>
        <TaskItem $w={86}><FolderIcon />MegaYuntas</TaskItem>
        <TaskItem $w={86}><FolderIcon />SComersE...</TaskItem>
        <TaskItem $w={44} $solo><IeIcon /></TaskItem>
        <TaskItem $w={84}><ChromeIcon />Jair Vasqu...</TaskItem>
        <TaskItem $w={86}><ChromeIcon />MEGAYUN...</TaskItem>
        <TaskItem $w={88}><VmIcon />Windows ...</TaskItem>
        <TaskItem $w={86}><WordIcon />Ensayo LA ...</TaskItem>
        <TaskItem $w={87}><CorelIcon />Corel PHO...</TaskItem>
        <TaskItem $w={86} $active><PlastiIcon />PLASTISEL...</TaskItem>
        <TrayIcons />
        <Clock>05:37 p.m.<br />15/06/2015</Clock>
        <ShowDesktop />
      </Taskbar>
      <VentaDialog />
    </Screen>
  );
}
